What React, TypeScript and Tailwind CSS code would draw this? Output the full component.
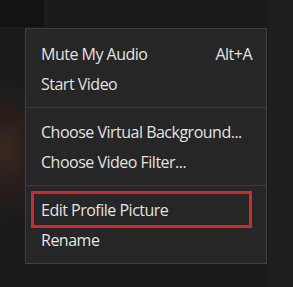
import React from "react";

const Row = ({ label, shortcut, highlight }: { label: string; shortcut?: string; highlight?: boolean }) => (
  <div className="relative flex h-[30px] items-center justify-between pl-[15px] pr-[14px]">
    {highlight && (
      <div className="pointer-events-none absolute left-[5px] right-[14px] top-[-4px] bottom-[-3px] border-[3px] border-[#cc2a33]" />
    )}
    <span className="relative">{label}</span>
    {shortcut && <span className="relative">{shortcut}</span>}
  </div>
);

export default function App() {
  return (
    <div
      className="relative h-[287px] w-[293px] overflow-hidden bg-[#1b1b1b]"
      style={{ fontFamily: '"Open Sans", "Noto Sans", sans-serif' }}
    >
      <div className="absolute inset-0 bg-[radial-gradient(ellipse_55px_75px_at_5px_150px,#382921_0%,#281f1a_45%,transparent_100%)]" />
      <div className="absolute left-0 top-0 h-[27px] w-[44px] bg-[#131313]" />
      <div className="absolute right-0 top-0 h-full w-[24px] bg-[#1e1e1e]" />
      <div className="relative pl-[25px] pt-[28px]">
        <div className="w-[242px] border border-[#3f3f3f] bg-[#262626] text-[16px] tracking-[-0.5px] text-[#e2e2e2]">
          <div className="pt-[10px] pb-[8px]">
            <Row label="Mute My Audio" shortcut="Alt+A" />
            <Row label="Start Video" />
          </div>
          <div className="h-px bg-[#3c3c3c]" />
          <div className="pt-[9px] pb-[8px]">
            <Row label="Choose Virtual Background..." />
            <Row label="Choose Video Filter..." />
          </div>
          <div className="h-px bg-[#3c3c3c]" />
          <div className="pt-[9px] pb-[8px]">
            <Row label="Edit Profile Picture" highlight />
            <Row label="Rename" />
          </div>
        </div>
      </div>
    </div>
  );
}
